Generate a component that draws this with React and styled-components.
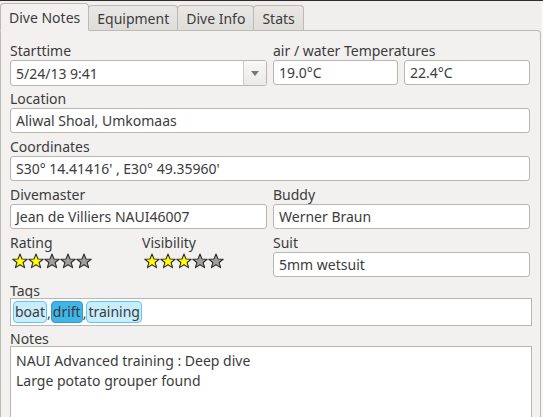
import React from "react";
import styled, { createGlobalStyle } from "styled-components";

const Global = createGlobalStyle`
  html, body {
    margin: 0;
    padding: 0;
    background: #f0efed;
    font-family: "Noto Sans", "Open Sans", sans-serif;
    font-size: 14px;
    color: #3c3c3c;
    overflow: hidden;
  }
`;

function Star({ on }) {
  return (
    <svg width="16" height="16" viewBox="0 0 16 16">
      <polygon
        points="8,1 10,6 15.2,6.2 11.1,9.5 12.6,14.6 8,11.7 3.4,14.6 4.9,9.5 0.8,6.2 6,6"
        fill={on ? "#ffff00" : "#a0a0a0"}
        stroke="#2f2f2f"
        strokeWidth="1.1"
        strokeLinejoin="round"
      />
    </svg>
  );
}

function Stars({ value }) {
  return (
    <StarRow>
      {[1, 2, 3, 4, 5].map((i) => (
        <Star key={i} on={i <= value} />
      ))}
    </StarRow>
  );
}

export default function App() {
  return (
    <>
      <Global />
      <Window>
        <TabBar>
          <Tab $active>Dive Notes</Tab>
          <Tab>Equipment</Tab>
          <Tab>Dive Info</Tab>
          <Tab>Stats</Tab>
        </TabBar>
        <Pane>
          <Form>
            <Field>
              <Label>Starttime</Label>
              <Combo>
                <ComboText>5/24/13 9:41</ComboText>
                <ComboButton>
                  <svg width="8" height="5" viewBox="0 0 8 5">
                    <polygon points="0,0 8,0 4,5" fill="#777" />
                  </svg>
                </ComboButton>
              </Combo>
            </Field>
            <Field>
              <Label>air / water Temperatures</Label>
              <Pair>
                <Input>19.0°C</Input>
                <Input>22.4°C</Input>
              </Pair>
            </Field>
            <Field $wide>
              <Label>Location</Label>
              <Input>Aliwal Shoal, Umkomaas</Input>
            </Field>
            <Field $wide>
              <Label>Coordinates</Label>
              <Input>S30° 14.41416' , E30° 49.35960'</Input>
            </Field>
            <Field>
              <Label>Divemaster</Label>
              <Input>Jean de Villiers NAUI46007</Input>
            </Field>
            <Field>
              <Label>Buddy</Label>
              <Input>Werner Braun</Input>
            </Field>
            <Pair $split>
              <Field>
                <Label>Rating</Label>
                <Stars value={2} />
              </Field>
              <Field>
                <Label>Visibility</Label>
                <Stars value={3} />
              </Field>
            </Pair>
            <Field>
              <Label>Suit</Label>
              <Input>5mm wetsuit</Input>
            </Field>
            <Field $wide>
              <Label>Tags</Label>
              <TagBox>
                <Tag>boat</Tag>,<Tag $selected>drift</Tag>,<Tag>training</Tag>
              </TagBox>
            </Field>
            <Field $wide>
              <Label>Notes</Label>
              <Notes>
                NAUI Advanced training : Deep dive
                <br />
                Large potato grouper found
              </Notes>
            </Field>
          </Form>
        </Pane>
      </Window>
    </>
  );
}

const Window = styled.div`
  height: 417px;
  border-top: 1px solid #2e2d2a;
  box-sizing: border-box;
  display: flex;
  flex-direction: column;
  padding-right: 2px;
  background: linear-gradient(to left, #f6f6f6 2px, #f0efed 2px);
  overflow: hidden;
`;

const TabBar = styled.div`
  display: flex;
  align-items: flex-end;
  height: 29px;
  flex-shrink: 0;
  position: relative;
  z-index: 1;
`;

const Tab = styled.div`
  height: ${(p) => (p.$active ? "28px" : "25px")};
  box-sizing: border-box;
  padding: ${(p) => (p.$active ? "0" : "1px")} 8px 0 8px;
  display: flex;
  align-items: center;
  border: 1px solid #bdb9b4;
  border-bottom: ${(p) => (p.$active ? "1px solid #f2f1f0" : "none")};
  border-radius: 4px 4px 0 0;
  margin-right: -1px;
  margin-bottom: ${(p) => (p.$active ? "-1px" : "0")};
  background: ${(p) =>
    p.$active ? "#f2f1f0" : "linear-gradient(#eae8e5, #dfddd9)"};
  color: #3c3c3c;
`;

const Pane = styled.div`
  flex: 1;
  background: #f2f1f0;
  border: 1px solid #bdb9b4;
  border-bottom: none;
  border-radius: 0 4px 0 0;
  padding: 10px 9px 0 9px;
  overflow: hidden;
`;

const Form = styled.div`
  display: grid;
  grid-template-columns: 257px 257px;
  column-gap: 6px;
`;

const Field = styled.div`
  display: flex;
  flex-direction: column;
  grid-column: ${(p) => (p.$wide ? "1 / 3" : "auto")};
  height: 48px;
`;

const Label = styled.div`
  height: 19px;
  line-height: 19px;
  color: #3c3c3c;
  white-space: nowrap;
  flex-shrink: 0;
`;

const Pair = styled.div`
  display: grid;
  grid-template-columns: ${(p) => (p.$split ? "132px 125px" : "125px 126px")};
  column-gap: ${(p) => (p.$split ? "0" : "6px")};
`;

const Input = styled.div`
  height: 25px;
  box-sizing: border-box;
  background: #fff;
  border: 1px solid #bab6b1;
  border-radius: 3px;
  padding: 0 5px;
  display: flex;
  align-items: center;
  white-space: nowrap;
  color: #3c3c3c;
`;

const Combo = styled.div`
  height: 26px;
  box-sizing: border-box;
  display: flex;
  background: #fff;
  border: 1px solid #bab6b1;
  border-radius: 3px;
  overflow: hidden;
`;

const ComboText = styled.div`
  flex: 1;
  display: flex;
  align-items: center;
  padding: 0 5px;
`;

const ComboButton = styled.div`
  width: 22px;
  border-left: 1px solid #cfccc8;
  background: linear-gradient(#f8f8f7, #ebeae8);
  display: flex;
  align-items: center;
  justify-content: center;
`;

const StarRow = styled.div`
  display: flex;
  padding-left: 2px;
  margin-top: 1px;
`;

const TagBox = styled.div`
  height: 28px;
  box-sizing: border-box;
  width: 522px;
  background: #fff;
  border: 1px solid #bab6b1;
  display: flex;
  align-items: center;
  padding-left: 2px;
  margin-top: -2px;
  flex-shrink: 0;
`;

const Tag = styled.span`
  display: inline-block;
  height: 22px;
  line-height: 20px;
  box-sizing: border-box;
  padding: 0 1px;
  border-radius: 4px;
  border: 1px solid ${(p) => (p.$selected ? "#2d9bd0" : "#62c6f2")};
  background: ${(p) => (p.$selected ? "#40b5e8" : "#c8edfc")};
  color: #3c3c3c;
`;

const Notes = styled.div`
  height: 90px;
  flex-shrink: 0;
  width: 522px;
  box-sizing: border-box;
  background: #fff;
  border: 1px solid #bab6b1;
  border-bottom: none;
  padding: 4px 5px;
  line-height: 20px;
  margin-top: -2px;
`;
